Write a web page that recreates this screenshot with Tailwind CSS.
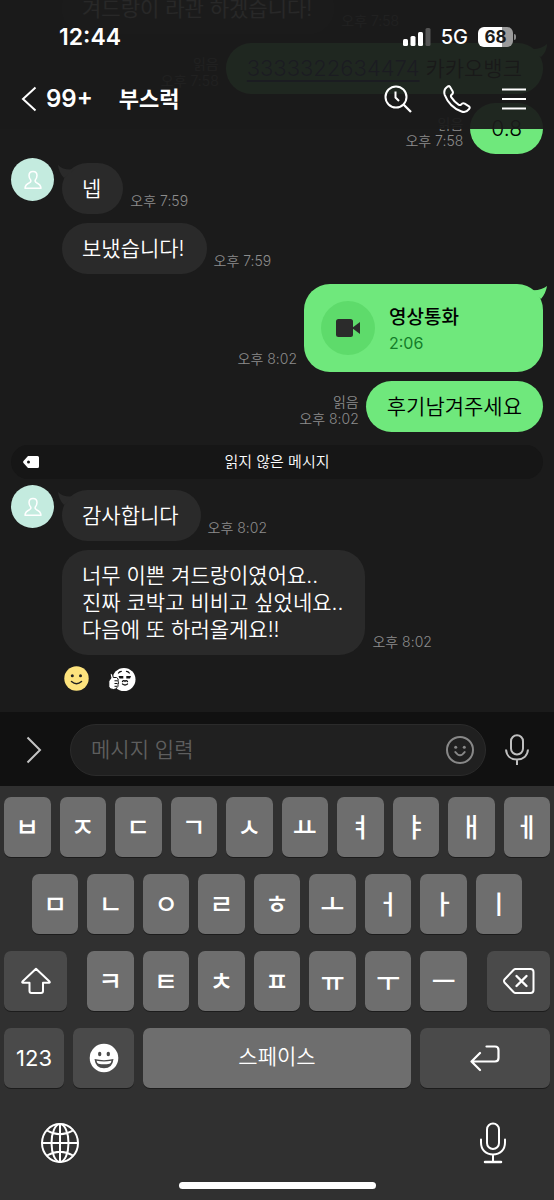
<!DOCTYPE html>
<html lang="ko">
<head>
<meta charset="utf-8">
<meta name="viewport" content="width=device-width, initial-scale=1">
<title>부스럭</title>
<script src="https://cdn.jsdelivr.net/npm/@tailwindcss/browser@4"></script>
</head>
<body class="flex min-h-screen flex-col bg-[#1b1b1b] font-['Inter','Noto_Sans_CJK_KR',sans-serif] text-white">

<div class="relative flex-1 overflow-hidden">
  <!-- Status bar and chat header, translucent over the messages -->
  <header class="absolute inset-x-0 top-0 z-10 flex h-[129px] flex-col bg-[#1b1b1b]/94">
    <div class="flex h-[68px] items-center justify-between pt-[6px] pr-[38px] pl-[59px]">
      <time class="text-[23px] leading-7 font-semibold">12:44</time>
      <div class="flex items-center gap-[10px]">
        <svg class="h-[18px] w-[28px]" viewBox="0 0 28 18" fill="#fff" aria-label="신호">
          <rect x="0" y="11" width="5" height="7" rx="1.5"/><rect x="7.5" y="8" width="5" height="10" rx="1.5"/><rect x="15" y="4" width="5" height="14" rx="1.5"/><rect x="22.5" y="0" width="5" height="18" rx="1.5" fill="#555"/>
        </svg>
        <span class="text-xl leading-7 font-medium">5G</span>
        <div class="flex items-center gap-px">
          <span class="flex h-5 w-[35px] items-center justify-center rounded-[6px] bg-linear-to-r from-white from-68% to-[#9b9b9b] to-68% text-[17px] leading-5 font-bold text-[#1b1b1b]">68</span>
          <span class="h-[6px] w-[2px] rounded-r-full bg-[#8a8a8a]"></span>
        </div>
      </div>
    </div>
    <div class="flex h-[61px] items-center justify-between pr-[28px] pl-[21px]">
      <div class="flex items-center">
        <button type="button" class="flex items-center gap-[9px] text-2xl font-semibold" aria-label="뒤로, 안 읽은 메시지 99+">
          <svg class="h-[26px] w-4" viewBox="0 0 16 26" fill="none" stroke="#fff" stroke-width="2"><path d="M14.500 1.500 L2 13 L14.500 24.500"/></svg>
          <span>99+</span>
        </button>
        <h1 class="ml-[26px] text-[22px] leading-8 font-bold">부스럭</h1>
      </div>
      <div class="flex items-center gap-[31px]">
        <button type="button" aria-label="검색">
          <svg class="h-7 w-7" viewBox="0 0 28 28" fill="none" stroke="#fff" stroke-width="2"><circle cx="12" cy="12" r="10.500"/><path d="M19.500 19.500 L27 27" stroke-width="2.300"/><path d="M11.500 6.500 V12.500 L15 16"/></svg>
        </button>
        <button type="button" aria-label="음성통화">
          <svg class="h-7 w-7" viewBox="0 0 28 28" fill="none" stroke="#fff" stroke-width="2" stroke-linejoin="round"><path d="M6.800 1.600 L9.600 6.300 C10.500 8 9.700 9 8.500 9.800 C7.600 10.500 7.800 11.400 8.400 12.400 C10.500 15.600 12.600 17.700 15.500 19.600 C16.500 20.200 17.400 20.300 18.100 19.500 C19 18.300 20 17.700 21.700 18.600 L26 21.300 C27.200 22.100 26.700 23.200 26 24.200 C24.100 26.700 21.500 27.600 18.500 26.500 C10.500 23.500 4.700 17.500 1.700 9.800 C.700 6.500 1.500 3.800 4 2 C5 1.200 6.100 .700 6.800 1.600Z"/></svg>
        </button>
        <button type="button" aria-label="메뉴">
          <svg class="h-6 w-6" viewBox="0 0 24 24" stroke="#fff" stroke-width="2"><path d="M0 2.500 H24 M0 12 H24 M0 21.500 H24"/></svg>
        </button>
      </div>
    </div>
  </header>

  <!-- Messages -->
  <main class="-mt-[17px] flex flex-col gap-[9px] px-[11px] pb-5 text-[21px] leading-[27px] font-[350]">
    <div class="flex items-end gap-[7px] pl-[51px]">
      <p class="rounded-[26px] bg-[#2a2a2a] py-3 pr-[22px] pl-5">겨드랑이 라관 하겠습니다!</p>
      <time class="pb-[5px] text-sm leading-[17px] text-[#8c8c8c]">오후 7:58</time>
    </div>
    <div class="flex items-end justify-end gap-[7px]">
      <p class="pb-[5px] text-right text-sm leading-[17px] text-[#8c8c8c]">읽음<br><time>오후 7:58</time></p>
      <div class="relative rounded-[26px] bg-[#6fe87c] px-[21px] py-3 text-black">
        <a href="tel:3333322634474" class="text-[22px] text-[#20308a] underline underline-offset-4">3333322634474</a> 카카오뱅크
        <svg class="absolute -top-px -right-1 h-5 w-5" viewBox="0 0 20 20" fill="#6fe87c"><path d="M3 7 Q14 8 20 2 Q20 9 14 15Z"/></svg>
      </div>
    </div>
    <div class="flex items-end justify-end gap-[7px]">
      <p class="pb-[5px] text-right text-sm leading-[17px] text-[#8c8c8c]">읽음<br><time>오후 7:58</time></p>
      <p class="rounded-[26px] bg-[#6fe87c] px-[21px] py-3 text-black">0.8</p>
    </div>

    <div class="flex gap-2">
      <div class="-mt-[5px] flex size-[43px] shrink-0 items-center justify-center self-start rounded-full bg-[#c4ebdf]">
        <svg class="h-5 w-[18px]" viewBox="0 0 18 20" fill="none" stroke="#fff" stroke-width="1.500" stroke-linejoin="round"><path d="M9 1.500 C6.500 1.500 5 3.200 5 5.600 C5 7.500 5.700 8.800 6.700 10 C7.300 11.500 6.800 12 5.500 12.700 C3 13.800 1.200 14.800 1 18.300 H17 C16.800 14.800 15 13.800 12.500 12.700 C11.200 12 10.700 11.500 11.300 10 C12.300 8.800 13 7.500 13 5.600 C13 3.200 11.500 1.500 9 1.500Z"/></svg>
      </div>
      <div class="flex items-end gap-[7px]">
        <div class="relative rounded-[26px] bg-[#2a2a2a] py-3 pr-[22px] pl-5">넵
          <svg class="absolute top-px -left-1 h-5 w-5" viewBox="0 0 20 20" fill="#2a2a2a"><path d="M17 5 Q6 7 0 1 Q1 9 6 14Z"/></svg>
        </div>
        <time class="pb-[5px] text-sm leading-[17px] text-[#8c8c8c]">오후 7:59</time>
      </div>
    </div>
    <div class="flex items-end gap-[7px] pl-[51px]">
      <p class="rounded-[26px] bg-[#2a2a2a] py-3 pr-[22px] pl-5">보냈습니다!</p>
      <time class="pb-[5px] text-sm leading-[17px] text-[#8c8c8c]">오후 7:59</time>
    </div>

    <div class="mt-px flex items-end justify-end gap-[7px]">
      <time class="pb-[5px] text-sm leading-[17px] text-[#8c8c8c]">오후 8:02</time>
      <button type="button" class="relative flex w-[239px] items-center gap-[14px] rounded-[26px] bg-[#6fe87c] py-[17px] pl-[17px] text-left text-black">
        <span class="flex size-[54px] items-center justify-center rounded-full bg-[#5edb6b]">
          <svg class="h-[18px] w-6" viewBox="0 0 24 18" fill="#2b2b2b"><rect x="0" y="0" width="17" height="18" rx="2.500"/><path d="M16 9 L24 3 V15Z"/></svg>
        </span>
        <span class="flex flex-col pt-[2px]">
          <span class="text-[19px] leading-[27px] font-medium">영상통화</span>
          <span class="text-base leading-6 font-normal text-[#147d2a]">2:06</span>
        </span>
        <svg class="absolute top-0 -right-1 h-5 w-5" viewBox="0 0 20 20" fill="#6fe87c"><path d="M3 6 Q14 7 20 2 Q19 9 14 15Z"/></svg>
      </button>
    </div>
    <div class="flex items-end justify-end gap-[7px]">
      <p class="pb-[5px] text-right text-sm leading-[17px] text-[#8c8c8c]">읽음<br><time>오후 8:02</time></p>
      <p class="rounded-[26px] bg-[#6fe87c] px-[21px] py-3 text-black">후기남겨주세요</p>
    </div>

    <div class="mt-1 mb-[2px] grid h-[34px] grid-cols-[1fr_auto_1fr] items-center rounded-full bg-[#161616] px-3">
      <svg class="h-3 w-4" viewBox="0 0 16 12" fill="#fff"><path fill-rule="evenodd" d="M5 0 H14.500 Q16 0 16 1.500 V10.500 Q16 12 14.500 12 H5 L.500 7 Q-.300 6 .500 5Z M5.500 4.500 A1.500 1.500 0 1 0 5.500 7.500 A1.500 1.500 0 1 0 5.500 4.500Z"/></svg>
      <p class="text-[15px] leading-5">읽지 않은 메시지</p>
    </div>

    <div class="flex gap-2">
      <div class="-mt-[5px] flex size-[43px] shrink-0 items-center justify-center self-start rounded-full bg-[#c4ebdf]">
        <svg class="h-5 w-[18px]" viewBox="0 0 18 20" fill="none" stroke="#fff" stroke-width="1.500" stroke-linejoin="round"><path d="M9 1.500 C6.500 1.500 5 3.200 5 5.600 C5 7.500 5.700 8.800 6.700 10 C7.300 11.500 6.800 12 5.500 12.700 C3 13.800 1.200 14.800 1 18.300 H17 C16.800 14.800 15 13.800 12.500 12.700 C11.200 12 10.700 11.500 11.300 10 C12.300 8.800 13 7.500 13 5.600 C13 3.200 11.500 1.500 9 1.500Z"/></svg>
      </div>
      <div class="flex items-end gap-[7px]">
        <div class="relative rounded-[26px] bg-[#2a2a2a] py-3 pr-[22px] pl-5">감사합니다
          <svg class="absolute top-px -left-1 h-5 w-5" viewBox="0 0 20 20" fill="#2a2a2a"><path d="M17 5 Q6 7 0 1 Q1 9 6 14Z"/></svg>
        </div>
        <time class="pb-[5px] text-sm leading-[17px] text-[#8c8c8c]">오후 8:02</time>
      </div>
    </div>
    <div class="flex items-end gap-[7px] pl-[51px]">
      <p class="rounded-[26px] bg-[#2a2a2a] py-3 pr-[22px] pl-5">너무 이쁜 겨드랑이였어요..<br>진짜 코박고 비비고 싶었네요..<br>다음에 또 하러올게요!!</p>
      <time class="pb-[5px] text-sm leading-[17px] text-[#8c8c8c]">오후 8:02</time>
    </div>

    <div class="mt-[2px] flex items-center gap-[19px] pl-[53px]">
      <button type="button" aria-label="웃는 얼굴">
        <svg class="h-[25px] w-[25px]" viewBox="0 0 25 25"><circle cx="12.500" cy="12.500" r="12.200" fill="#fde37d"/><circle cx="8.300" cy="9.800" r="1.500" fill="#222"/><circle cx="16.500" cy="9.800" r="1.500" fill="#222"/><path d="M7.500 15.500 Q12.500 20 17.500 15.500" fill="none" stroke="#222" stroke-width="1.500" stroke-linecap="round"/></svg>
      </button>
      <button type="button" aria-label="좋아요">
        <svg class="h-[25px] w-[28px]" viewBox="0 0 28 25"><circle cx="16" cy="13.500" r="11.500" fill="#fff"/><g stroke="#111" fill="none" stroke-width="1.300" stroke-linecap="round"><path d="M10.500 7 Q11.500 5.500 13.300 5.300 M18.500 5.300 Q20.300 5.500 21.300 7"/><path d="M14.500 15.500 Q15.700 14 17 15.300 Q18.200 14 19.500 15.500 M14.500 18 Q17 20 19.500 18"/></g><path d="M10.500 10 H15.300 V12.500 H11.500Z M18.300 10 H23 L22 12.500 H18.300Z" fill="#111"/><path d="M2 8 Q3.500 6.500 4.700 9 L5.300 11.500 H8.500 Q11 12.500 10 15 Q11 17 10 18.500 Q10.500 20.500 9 21.500 Q8.500 23.500 5.500 23.500 Q2 23.500 .800 21 V15 L3 12Z" fill="#fff" stroke="#111" stroke-width="1"/><path d="M6.500 14.800 H9.500 M6.500 17.500 H9.500 M6.500 20.300 H9" stroke="#111" stroke-width="1"/></svg>
      </button>
    </div>
  </main>
</div>

<!-- Message composer -->
<form class="flex h-[74px] shrink-0 items-center bg-[#111] pt-px pr-[25px] pl-[26px]" onsubmit="return false">
  <button type="button" class="mr-7" aria-label="더보기">
    <svg class="h-7 w-4" viewBox="0 0 16 28" fill="none" stroke="#c4c4c4" stroke-width="2"><path d="M1.500 1.500 L14 14 L1.500 26.500"/></svg>
  </button>
  <div class="flex h-[52px] flex-1 items-center rounded-full border border-[#2b2b2b] bg-[#202020] pt-px pr-[11px] pl-5">
    <input type="text" aria-label="메시지 입력" placeholder="메시지 입력" class="h-10 min-w-0 flex-1 bg-transparent text-[21px] leading-10 font-[350] outline-none placeholder:text-[#5e5e5e]">
    <button type="button" aria-label="스티커">
      <svg class="h-7 w-7" viewBox="0 0 28 28" fill="none" stroke="#888" stroke-width="2"><circle cx="14" cy="14" r="13"/><circle cx="9.700" cy="11.200" r="1.500" fill="#888" stroke="none"/><circle cx="18.300" cy="11.200" r="1.500" fill="#888" stroke="none"/><path d="M9.300 16 Q14 22.500 18.700 16" stroke-linecap="round"/></svg>
    </button>
  </div>
  <button type="button" class="ml-[19px]" aria-label="음성 메시지">
    <svg class="h-[31px] w-6" viewBox="0 0 24 31" fill="none" stroke="#c0c0c0" stroke-width="2"><rect x="6" y="1.200" width="12" height="19.300" rx="6"/><path d="M1 15.500 C1.500 22 6 25.500 12 25.500 S22.500 22 23 15.500 M12 25.500 V31"/></svg>
  </button>
</form>

<!-- Korean keyboard -->
<section aria-label="키보드" class="flex h-[414px] shrink-0 flex-col bg-[#303030] pt-[11px] text-[26px] font-medium">
  <div class="flex flex-col gap-[17px] px-1">
    <div class="flex gap-[9px] *:h-[60px] *:min-w-0 *:flex-1 *:rounded-[7px] *:bg-[#6e6e6e] *:shadow-[0_1px_0_#1c1c1c]">
      <button type="button">ㅂ</button><button type="button">ㅈ</button><button type="button">ㄷ</button><button type="button">ㄱ</button><button type="button">ㅅ</button><button type="button">ㅛ</button><button type="button">ㅕ</button><button type="button">ㅑ</button><button type="button">ㅐ</button><button type="button">ㅔ</button>
    </div>
    <div class="flex gap-[9px] px-7 *:h-[60px] *:min-w-0 *:flex-1 *:rounded-[7px] *:bg-[#6e6e6e] *:shadow-[0_1px_0_#1c1c1c]">
      <button type="button">ㅁ</button><button type="button">ㄴ</button><button type="button">ㅇ</button><button type="button">ㄹ</button><button type="button">ㅎ</button><button type="button">ㅗ</button><button type="button">ㅓ</button><button type="button">ㅏ</button><button type="button">ㅣ</button>
    </div>
    <div class="flex gap-5">
      <button type="button" aria-label="Shift" class="flex h-[60px] w-[63px] items-center justify-center rounded-[7px] bg-[#4a4a4a] shadow-[0_1px_0_#1c1c1c]">
        <svg class="h-7 w-[30px]" viewBox="0 0 30 28" fill="none" stroke="#fff" stroke-width="2" stroke-linejoin="round"><path d="M15 1.800 L28.500 14.500 Q29.300 15.700 28 15.700 H22 V24 Q22 26 20 26 H10.500 Q8.500 26 8.500 24 V15.700 H2 Q.700 15.700 1.500 14.500Z"/></svg>
      </button>
      <div class="flex flex-1 gap-[9px] *:h-[60px] *:min-w-0 *:flex-1 *:rounded-[7px] *:bg-[#6e6e6e] *:shadow-[0_1px_0_#1c1c1c]">
        <button type="button">ㅋ</button><button type="button">ㅌ</button><button type="button">ㅊ</button><button type="button">ㅍ</button><button type="button">ㅠ</button><button type="button">ㅜ</button><button type="button">ㅡ</button>
      </div>
      <button type="button" aria-label="지우기" class="flex h-[60px] w-[63px] items-center justify-center rounded-[7px] bg-[#4a4a4a] shadow-[0_1px_0_#1c1c1c]">
        <svg class="h-[26px] w-8" viewBox="0 0 32 26" fill="none" stroke="#fff" stroke-width="2" stroke-linejoin="round" stroke-linecap="round"><path d="M12.500 1 H27.500 Q30.500 1 30.500 4 V22 Q30.500 25 27.500 25 H12.500 Q11.500 25 10.500 24 L1.500 14.500 Q.500 13 1.500 11.500 L10.500 2 Q11.500 1 12.500 1Z"/><path d="M13.500 8 L23.500 18 M23.500 8 L13.500 18" stroke-width="2.400"/></svg>
      </button>
    </div>
    <div class="flex gap-[9px] *:h-[60px] *:rounded-[7px] *:shadow-[0_1px_0_#1c1c1c]">
      <button type="button" class="w-[60px] bg-[#4a4a4a] text-[22px] font-normal">123</button>
      <button type="button" aria-label="이모지" class="flex w-[61px] items-center justify-center bg-[#4a4a4a]">
        <svg class="h-[30px] w-[30px]" viewBox="0 0 30 30"><circle cx="15" cy="15" r="14.300" fill="#fff"/><ellipse cx="10.700" cy="11" rx="1.700" ry="2.200" fill="#4a4a4a"/><ellipse cx="19.300" cy="11" rx="1.700" ry="2.200" fill="#4a4a4a"/><path d="M5.500 16 Q15 18.300 24.500 16 Q23.500 25.300 15 25.300 T5.500 16Z" fill="#4a4a4a"/><path d="M7.500 17.700 Q15 19.300 22.500 17.700 Q22 20.300 20.500 20.700 Q15 21.700 9.500 20.700 Q8 20.300 7.500 17.700Z" fill="#fff"/></svg>
      </button>
      <button type="button" class="flex-1 bg-[#6e6e6e] pb-[2px] text-[21px] font-[350]">스페이스</button>
      <button type="button" aria-label="줄바꿈" class="flex w-[130px] items-center justify-center bg-[#4a4a4a]">
        <svg class="h-7 w-[30px]" viewBox="0 0 30 28" fill="none" stroke="#fff" stroke-width="2.200" stroke-linecap="round" stroke-linejoin="round"><path d="M16.500 2.500 H25 Q28.500 2.500 28.500 6 V14 Q28.500 17.500 25 17.500 H1.500 M10 9 L1.500 17.500 L10 26"/></svg>
      </button>
    </div>
  </div>
  <div class="flex flex-1 items-center justify-between px-10 pt-[15px]">
    <button type="button" aria-label="키보드 전환">
      <svg class="h-10 w-10" viewBox="0 0 40 40" fill="none" stroke="#fff" stroke-width="2"><ellipse cx="20" cy="20" rx="18" ry="19"/><ellipse cx="20" cy="20" rx="8.500" ry="19"/><path d="M20 1 V39 M2 20 H38 M7 7.500 Q20 15 33 7.500 M7 32.500 Q20 25 33 32.500"/></svg>
    </button>
    <button type="button" aria-label="받아쓰기" class="mr-2">
      <svg class="h-[42px] w-[26px]" viewBox="0 0 26 42" fill="none" stroke="#fff" stroke-width="2" stroke-linecap="round"><rect x="7" y="1.500" width="12" height="25.500" rx="6"/><path d="M1 17.500 V20.500 C1 28 6 32.500 13 32.500 S25 28 25 20.500 V17.500 M13 32.500 V40"/><path d="M5 40 H21" stroke-width="2.500"/></svg>
    </button>
  </div>
  <div class="mx-auto mb-[11px] h-[7px] w-[197px] rounded-full bg-white"></div>
</section>
</body>
</html>
